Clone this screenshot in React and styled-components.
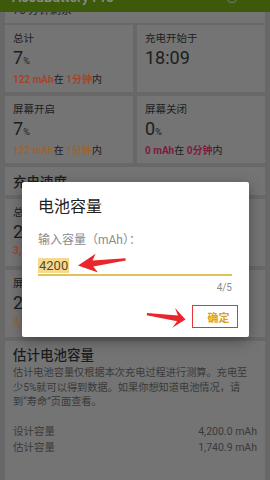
import styled, { createGlobalStyle } from "styled-components";

const GlobalStyle = createGlobalStyle`
  html, body {
    margin: 0;
    padding: 0;
  }
  body {
    background: #686868;
    font-family: Roboto, "Noto Sans CJK SC", sans-serif;
  }
`;

const tones = {
  orange: "#a5442b",
  amber: "#9a6530",
  crimson: "#7e1b3b",
};

const Screen = styled.div`
  position: relative;
  width: 270px;
  height: 480px;
  overflow: hidden;
  background: #686868;
  display: flex;
  flex-direction: column;
`;

const Toolbar = styled.div`
  flex: none;
  height: 12px;
  background: #3d5a0b;
  display: flex;
  align-items: flex-end;
  justify-content: space-between;
  padding: 0 12px;
  overflow: hidden;
`;

const ToolbarTitle = styled.div`
  color: #8c8c8c;
  font-size: 14px;
  line-height: 14px;
  font-weight: 500;
  margin-bottom: 8px;
`;

const ToolbarIcon = styled.div`
  width: 10px;
  height: 10px;
  border-radius: 50%;
  border: 1.5px solid #7a7a7a;
  margin: 0 20px 9px 0;
`;

const Content = styled.div`
  flex: 1;
  display: flex;
  flex-direction: column;
  padding: 0 5px;
`;

const Strip = styled.div`
  height: 11px;
  background: #747474;
  overflow: hidden;
  padding-left: 8px;
  display: flex;
  align-items: flex-end;
`;

const StripText = styled.div`
  font-size: 11px;
  line-height: 11px;
  color: #1d1d1d;
  margin-bottom: 7px;
`;

const Grid = styled.div`
  display: grid;
  grid-template-columns: 1fr 1fr;
  gap: 4px;
  margin-top: ${(p) => p.$top || 4}px;
`;

const Cell = styled.div`
  height: 67px;
  box-sizing: border-box;
  background: #747474;
  padding: 8px 8px 0 8px;
  color: #1d1d1d;
`;

const Label = styled.div`
  font-size: 10.5px;
  line-height: 12px;
`;

const Big = styled.div`
  font-size: 18px;
  line-height: 22px;
  margin-top: 2px;
  span {
    font-size: 9px;
  }
`;

const Sub = styled.div`
  font-size: 10px;
  line-height: 12px;
  margin-top: 2px;
  white-space: nowrap;
`;

const Hl = styled.b`
  color: ${(p) => tones[p.$tone]};
  font-weight: 700;
`;

const SectionHead = styled.div`
  margin-top: 4px;
  height: 28px;
  box-sizing: border-box;
  background: #747474;
  padding: 6px 8px 0;
  font-size: 13.5px;
  line-height: 18px;
  font-weight: 500;
  color: #1d1d1d;
`;

const Card = styled.div`
  flex: 1;
  margin-top: 4px;
  background: #747474;
  padding: 5px 8px 0;
`;

const CardTitle = styled.div`
  font-size: 13.5px;
  line-height: 18px;
  font-weight: 500;
  color: #1d1d1d;
`;

const Desc = styled.div`
  margin-top: 2px;
  font-size: 10.2px;
  line-height: 14.5px;
  color: #3a3a3a;
  div {
    white-space: nowrap;
  }
`;

const Rows = styled.div`
  margin-top: 14.5px;
`;

const Row = styled.div`
  display: flex;
  justify-content: space-between;
  font-size: 10.5px;
  line-height: 16px;
  color: #3a3a3a;
`;

const Dialog = styled.div`
  position: absolute;
  left: 22px;
  top: 182px;
  width: 227px;
  height: 155px;
  box-sizing: border-box;
  background: #ffffff;
  border-radius: 2px;
  box-shadow: 0 4px 14px rgba(0, 0, 0, 0.35);
  padding: 15px 17px 0 16px;
  display: flex;
  flex-direction: column;
`;

const DialogTitle = styled.div`
  font-size: 16px;
  line-height: 20px;
  color: #212121;
`;

const FieldLabel = styled.div`
  margin-top: 16px;
  font-size: 12px;
  line-height: 14px;
  color: #8a8a8a;
  white-space: nowrap;
`;

const Field = styled.div`
  margin-top: 11px;
  height: 18px;
  box-sizing: border-box;
  border-bottom: 2px solid #e3c15c;
  display: flex;
  align-items: flex-start;
`;

const Selected = styled.span`
  background: #f5d98f;
  color: #5b4a27;
  font-size: 13px;
  line-height: 15px;
  padding: 0 1px;
`;

const Counter = styled.div`
  margin-top: 6px;
  font-size: 10px;
  line-height: 12px;
  text-align: right;
  color: #8c8c8c;
`;

const Actions = styled.div`
  margin-top: 11px;
  display: flex;
  justify-content: flex-end;
  margin-right: -6px;
`;

const OkButton = styled.button`
  width: 46px;
  height: 23px;
  box-sizing: border-box;
  border: 1.5px solid #e2363b;
  background: transparent;
  color: #d9a31d;
  font-family: Roboto, "Noto Sans CJK SC", sans-serif;
  font-size: 11px;
  font-weight: 700;
  padding: 0 0 0 7px;
  display: flex;
  align-items: center;
  justify-content: center;
`;

const Marks = styled.svg`
  position: absolute;
  left: 0;
  top: 0;
  pointer-events: none;
`;

function arrow(len, head, half) {
  const neck = head - 4;
  return `0,0 ${head},${-half} ${neck},${-3} ${len},${-1.2} ${len},1.2 ${neck},3 ${head},${half}`;
}

function StatCell({ label, value, unit, parts }) {
  return (
    <Cell>
      <Label>{label}</Label>
      <Big>
        {value}
        {unit && <span>{unit}</span>}
      </Big>
      {parts && (
        <Sub>
          {parts.map((p, i) =>
            p.tone ? (
              <Hl key={i} $tone={p.tone}>
                {p.text}
              </Hl>
            ) : (
              <span key={i}>{p.text}</span>
            )
          )}
        </Sub>
      )}
    </Cell>
  );
}

const during = (mah, min, tone) => [
  { text: `${mah} mAh`, tone },
  { text: "在 " },
  { text: `${min}分钟`, tone },
  { text: "内" },
];

export default function App() {
  return (
    <Screen>
      <GlobalStyle />
      <Toolbar>
        <ToolbarTitle>AccuBattery Pro</ToolbarTitle>
        <ToolbarIcon />
      </Toolbar>
      <Content>
        <Strip>
          <StripText>75 分钟剩余</StripText>
        </Strip>
        <Grid $top={2}>
          <StatCell label="总计" value="7" unit="%" parts={during(122, 1, "orange")} />
          <StatCell label="充电开始于" value="18:09" />
          <StatCell label="屏幕开启" value="7" unit="%" parts={during(122, 1, "amber")} />
          <StatCell label="屏幕关闭" value="0" unit="%" parts={during(0, 0, "crimson")} />
        </Grid>
        <SectionHead>充电速度</SectionHead>
        <Grid>
          <StatCell label="总计" value="2,090 mA" parts={[{ text: "3,512 mW", tone: "orange" }]} />
          <StatCell label="每小时" value="35 %" />
          <StatCell label="屏幕开启" value="2,090 mA" parts={[{ text: "3,512 mW", tone: "amber" }]} />
          <StatCell label="屏幕关闭" value="0 mA" />
        </Grid>
        <Card>
          <CardTitle>估计电池容量</CardTitle>
          <Desc>
            <div>估计电池容量仅根据本次充电过程进行测算。充电至</div>
            <div>少5%就可以得到数据。如果你想知道电池情况，请</div>
            <div>到“寿命”页面查看。</div>
          </Desc>
          <Rows>
            <Row>
              <span>设计容量</span>
              <span>4,200.0 mAh</span>
            </Row>
            <Row>
              <span>估计容量</span>
              <span>1,740.9 mAh</span>
            </Row>
          </Rows>
        </Card>
      </Content>

      <Dialog>
        <DialogTitle>电池容量</DialogTitle>
        <FieldLabel>输入容量（mAh）：</FieldLabel>
        <Field>
          <Selected>4200</Selected>
        </Field>
        <Counter>4/5</Counter>
        <Actions>
          <OkButton>确定</OkButton>
        </Actions>
      </Dialog>

      <Marks width="270" height="480" viewBox="0 0 270 480">
        <polygon points={arrow(48, 19, 9.5)} fill="#e8262b" transform="translate(78 265.5) rotate(-7.3)" />
        <polygon points={arrow(39, 12, 10)} fill="#e8262b" transform="translate(185.5 319.5) rotate(187.9)" />
      </Marks>
    </Screen>
  );
}
